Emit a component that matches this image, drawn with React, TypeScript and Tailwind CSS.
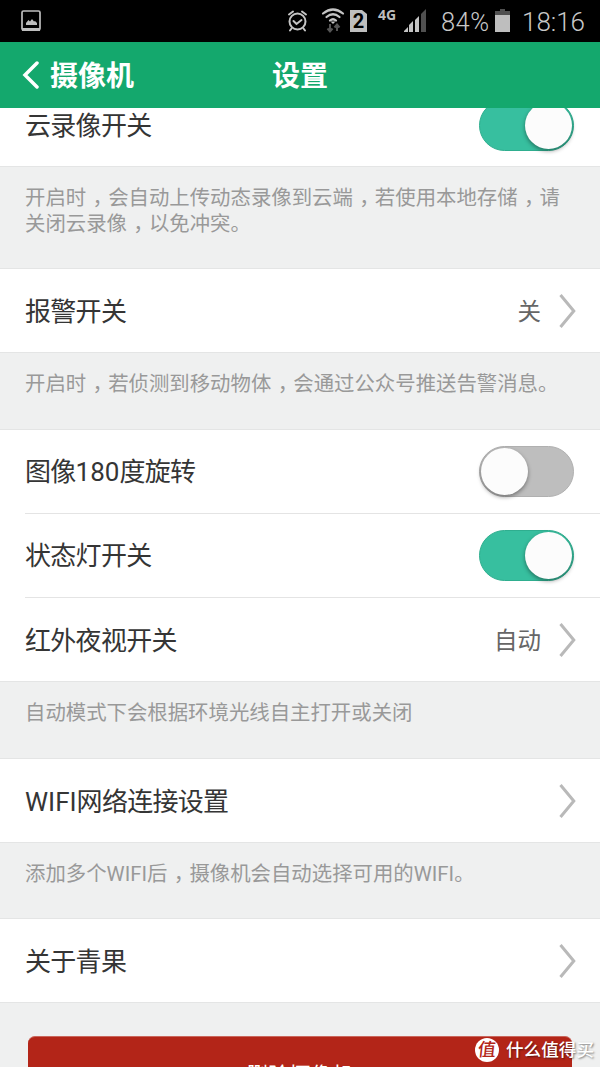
import type { ReactNode } from "react";

function Chevron() {
  return (
    <svg width="18" height="36" viewBox="0 0 18 36" fill="none" className="shrink-0">
      <path d="M1.500 2L14.800 18L1.500 34" stroke="#b9b9b9" strokeWidth="3" />
    </svg>
  );
}

function Toggle({ on = false }: { on?: boolean }) {
  return (
    <div
      className={
        on
          ? "mr-px flex h-[51px] w-[95px] shrink-0 items-center justify-end rounded-full border border-[#2fae8f] bg-[#37bf9f] pr-px"
          : "mr-px flex h-[51px] w-[95px] shrink-0 items-center rounded-full border border-[#b0b0b0] bg-[#bebebe] pl-px"
      }
    >
      <div className="size-[47px] rounded-full bg-[#fcfcfc] shadow-[0_2px_4px_rgba(0,0,0,0.4)]" />
    </div>
  );
}

function Row({ label, value, control, divider = false }: { label: ReactNode; value?: string; control?: ReactNode; divider?: boolean }) {
  return (
    <div className="h-[84px] shrink-0 bg-white pl-[25px]">
      <div className={`flex h-full items-center justify-between pr-[25px] ${divider ? "border-b border-[#e4e4e4]" : ""}`}>
        <span className="whitespace-nowrap pt-px text-[26px] leading-[36px] tracking-[-0.7px] text-[#353535]">{label}</span>
        {control ?? (
          <div className="-mr-[2px] flex items-center gap-[18px]">
            <span className="pt-px text-[23.5px] leading-[36px] text-[#666]">{value}</span>
            <Chevron />
          </div>
        )}
      </div>
    </div>
  );
}

function Comma() {
  return <span className="inline-block w-[22px] pl-[1px] text-center [font-feature-settings:'halt']">，</span>;
}

const noteHeights = {
  tall: "h-[103px]",
  normal: "h-[78px]",
  short: "h-[77px]",
};

function Note({ children, size = "normal" }: { children: ReactNode; size?: keyof typeof noteHeights }) {
  return (
    <div
      className={`-mt-px shrink-0 whitespace-nowrap border-y border-[#e4e5e5] bg-[#eff0f0] pl-[25px] pt-[17.5px] text-[20.4px] leading-[26px] text-[#999] ${noteHeights[size]}`}
    >
      {children}
    </div>
  );
}

function StatusBar() {
  return (
    <div className="flex h-[42px] shrink-0 items-center bg-black text-[#bebebe]">
      <svg width="600" height="42" viewBox="0 0 600 42" className="shrink-0">
        <rect x="22" y="11" width="18" height="19" rx="1.500" fill="none" stroke="#bebebe" strokeWidth="1.700" />
        <path d="M22 28h18v3H22zM26 25v-2l2.500-3 1.500 1.500 2-2.500 2 2.500 1-.5 2 2v2z" fill="#bebebe" />
        <g fill="none" stroke="#c4c4c4" strokeWidth="2" strokeLinecap="round">
          <circle cx="297.500" cy="21.500" r="8" />
          <path d="M293.500 21l3 3 5-4M289 14.500l4-3M306 14.500l-4-3M291.500 28.500l-1.500 2M303.500 28.500l1.500 2" />
          <path d="M323 13.500Q333 5.500 343 13.500M326.500 17Q333 11.500 339.500 17M330 20.500Q333 18 336 20.500" strokeWidth="2.200" />
        </g>
        <path d="M330.500 21.500h5l-2.500 2.500z" fill="#c4c4c4" />
        <path d="M330 24v7M327.500 28.500l2.500 3 2.500-3M337 31v-6M334.500 27.500l2.500-3 2.500 3" fill="none" stroke="#555" strokeWidth="2" />
        <path d="M350 10h12l5 4v18h-17z" fill="#bebebe" />
        <text x="358.500" y="28" textAnchor="middle" fontFamily="Roboto" fontSize="20" fontWeight="700" fill="#000">2</text>
        <text x="378" y="20" fontFamily="Open Sans" fontSize="14" fontWeight="700" fill="#bebebe">4G</text>
        <path d="M404 32v-1l4-4v5zM409 32v-7l4-4v11zM415 32V20l4-4v16z" fill="#c4c4c4" />
        <path d="M421 32V14l5-5v23z" fill="#505050" />
        <text x="441" y="31" fontFamily="Roboto" fontSize="25.500" fontWeight="300" fill="#c8c8c8" textLength="48">84%</text>
        <path d="M500 9h5v2h5v4h-15v-4h5z" fill="#505050" />
        <path d="M495 15h15v17h-15z" fill="#bebebe" />
        <text x="522" y="31" fontFamily="Roboto" fontSize="26" fontWeight="300" fill="#c8c8c8" textLength="63">18:16</text>
      </svg>
    </div>
  );
}

export default function App() {
  return (
    <div className="relative flex h-[1067px] w-[600px] flex-col overflow-hidden bg-[#eff0f0] font-[Roboto,'Noto_Sans_CJK_SC',sans-serif]">
      <StatusBar />
      <header className="z-10 grid h-[66px] shrink-0 grid-cols-[1fr_auto_1fr] items-center bg-[#14a86d] text-[28px] font-bold leading-[40px] text-white">
        <div className="flex items-center gap-[11px] pl-[22px]">
          <svg width="17" height="28" viewBox="0 0 17 28" fill="none">
            <path d="M15 2L3 14L15 26" stroke="white" strokeWidth="3.500" strokeLinecap="round" />
          </svg>
          <span className="pt-[3px]">摄像机</span>
        </div>
        <h1 className="pt-[3px]">设置</h1>
      </header>
      <main className="flex min-h-0 flex-1 flex-col overflow-hidden">
        <div className="-mt-[25px] shrink-0">
          <Row label="云录像开关" control={<Toggle on />} />
        </div>
        <Note size="tall">
          开启时<Comma />会自动上传动态录像到云端<Comma />若使用本地存储<Comma />请<br />
          关闭云录像<Comma />以免冲突。
        </Note>
        <Row label="报警开关" value="关" />
        <Note>
          开启时<Comma />若侦测到移动物体<Comma />会通过公众号推送告警消息。
        </Note>
        <Row label={<>图像<span className="tracking-normal">180</span>度旋转</>} control={<Toggle />} divider />
        <Row label="状态灯开关" control={<Toggle on />} divider />
        <Row label="红外夜视开关" value="自动" />
        <Note>自动模式下会根据环境光线自主打开或关闭</Note>
        <Row label={<><span className="tracking-normal">WIFI</span>网络连接设置</>} />
        <Note size="short">
          添加多个WIFI后<Comma />摄像机会自动选择可用的WIFI。
        </Note>
        <Row label="关于青果" />
        <div className="-mt-px shrink-0 border-t border-[#e4e5e5] px-[28px] pt-[33px]">
          <button className="flex h-[80px] w-full items-center justify-center rounded-[7px] border-t border-[#c9665c] bg-[#b32518] text-[21.4px] text-white">
            删除摄像机
          </button>
        </div>
      </main>
      <div className="absolute left-[475px] top-[1036px] z-20 flex items-center gap-[7px] whitespace-nowrap text-white">
        <span className="flex size-[24px] items-center justify-center rounded-full bg-white text-[18px] font-medium leading-[24px] text-[#b32518]">
          <span className="-skew-x-6">值</span>
        </span>
        <span className="pt-px text-[17.6px] font-medium leading-[26px] [text-shadow:1px_1px_2px_rgba(0,0,0,0.5)]">什么值得买</span>
      </div>
    </div>
  );
}
